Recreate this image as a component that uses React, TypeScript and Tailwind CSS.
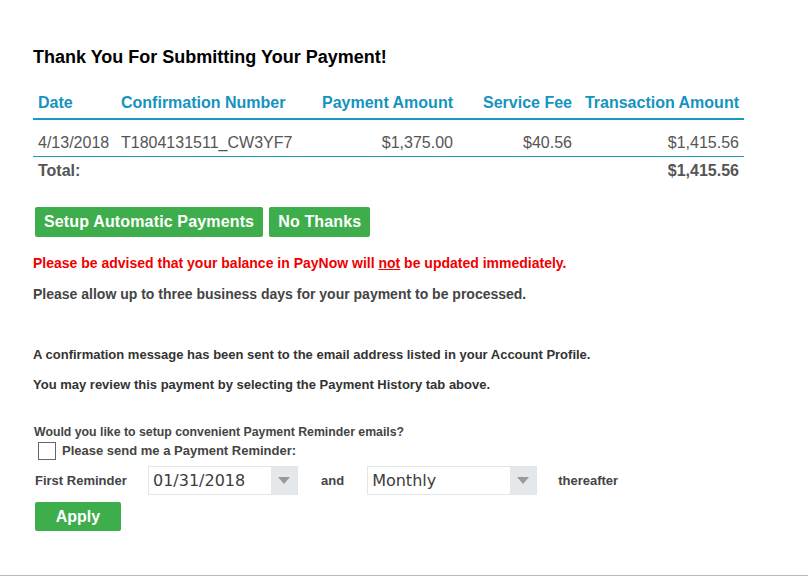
import React from "react";

const rows = [
  { date: "4/13/2018", conf: "T1804131511_CW3YF7", pay: "$1,375.00", fee: "$40.56", total: "$1,415.56" },
];

const cols = "grid grid-cols-[83px_184px_158px_119px_167px]";

function SelectBox({ value, width }: { value: string; width: string }) {
  return (
    <div className={`flex h-[29px] ${width} border border-[#e3e6e8] bg-white`}>
      <div className="flex-1 flex items-center pl-[4px] pt-[1px] text-[16px] font-normal text-[#3d3d3d] font-['DejaVu_Sans',sans-serif]">
        {value}
      </div>
      <div className="w-[26px] bg-[#e5e8ea] flex items-center justify-center">
        <svg width="12" height="7" viewBox="0 0 12 7">
          <path d="M0 0 L12 0 L6 7 Z" fill="#9a9a9a" />
        </svg>
      </div>
    </div>
  );
}

export default function App() {
  return (
    <div className="h-[576px] border-b border-[#b9b9b9] bg-white font-['Liberation_Sans',Arial,sans-serif]">
      <div className="pl-[33px] pt-[46px]">
        <h1 className="text-[18px] leading-[22px] font-bold text-black">
          Thank You For Submitting Your Payment!
        </h1>

        <div className="mt-[20px] w-[711px] text-[16px]">
          <div className={`${cols} h-[32px] items-center border-b-2 border-[#1a98c2] text-[#1593c0] font-bold leading-[30px]`}>
            <div className="pl-[5px]">Date</div>
            <div className="pl-[5px]">Confirmation Number</div>
            <div className="pr-[5px] text-right">Payment Amount</div>
            <div className="pr-[5px] text-right">Service Fee</div>
            <div className="pr-[5px] text-right">Transaction Amount</div>
          </div>
          {rows.map((r) => (
            <div key={r.conf} className={`${cols} h-[37px] pt-[13px] border-b border-[#1a98c2] text-[#555555] leading-[20px]`}>
              <div className="pl-[5px]">{r.date}</div>
              <div className="pl-[5px]">{r.conf}</div>
              <div className="pr-[5px] text-right">{r.pay}</div>
              <div className="pr-[5px] text-right">{r.fee}</div>
              <div className="pr-[5px] text-right">{r.total}</div>
            </div>
          ))}
          <div className={`${cols} h-[28px] leading-[28px] font-bold text-[#555555]`}>
            <div className="pl-[5px]">Total:</div>
            <div />
            <div />
            <div />
            <div className="pr-[5px] text-right">$1,415.56</div>
          </div>
        </div>

        <div className="mt-[22px] ml-[2px] flex gap-[6px]">
          <button className="h-[30px] px-[9px] rounded-[2px] bg-[#3dae4b] text-white text-[16px] font-bold tracking-[0.15px]">
            Setup Automatic Payments
          </button>
          <button className="h-[30px] px-[9px] rounded-[2px] bg-[#3dae4b] text-white text-[16px] font-bold tracking-[0.15px]">
            No Thanks
          </button>
        </div>

        <p className="mt-[16px] text-[14px] leading-[20px] font-bold text-[#f00000]">
          Please be advised that your balance in PayNow will <span className="underline">not</span> be updated immediately.
        </p>
        <p className="mt-[11px] text-[14px] leading-[20px] font-bold text-[#444444]">
          Please allow up to three business days for your payment to be processed.
        </p>

        <p className="mt-[42px] text-[13px] leading-[18px] font-bold text-[#333333]">
          A confirmation message has been sent to the email address listed in your Account Profile.
        </p>
        <p className="mt-[12px] text-[13px] leading-[18px] font-bold text-[#333333]">
          You may review this payment by selecting the Payment History tab above.
        </p>

        <p className="mt-[29px] ml-[1px] text-[12.3px] leading-[18px] font-bold text-[#444444]">
          Would you like to setup convenient Payment Reminder emails?
        </p>
        <label className="ml-[5px] h-[20px] flex items-center gap-[6px] text-[13px] font-bold text-[#444444]">
          <span className="w-[18px] h-[18px] border border-[#666666] bg-white" />
          Please send me a Payment Reminder:
        </label>

        <div className="mt-[5px] ml-[2px] flex items-center text-[13px] font-bold text-[#444444]">
          <span className="w-[113px]">First Reminder</span>
          <SelectBox value="01/31/2018" width="w-[150px]" />
          <span className="ml-[23px]">and</span>
          <div className="ml-[23px]">
            <SelectBox value="Monthly" width="w-[170px]" />
          </div>
          <span className="ml-[21px]">thereafter</span>
        </div>

        <button className="mt-[7px] ml-[2px] h-[29px] w-[86px] rounded-[2px] bg-[#3dae4b] text-white text-[16px] font-bold">
          Apply
        </button>
      </div>
    </div>
  );
}
